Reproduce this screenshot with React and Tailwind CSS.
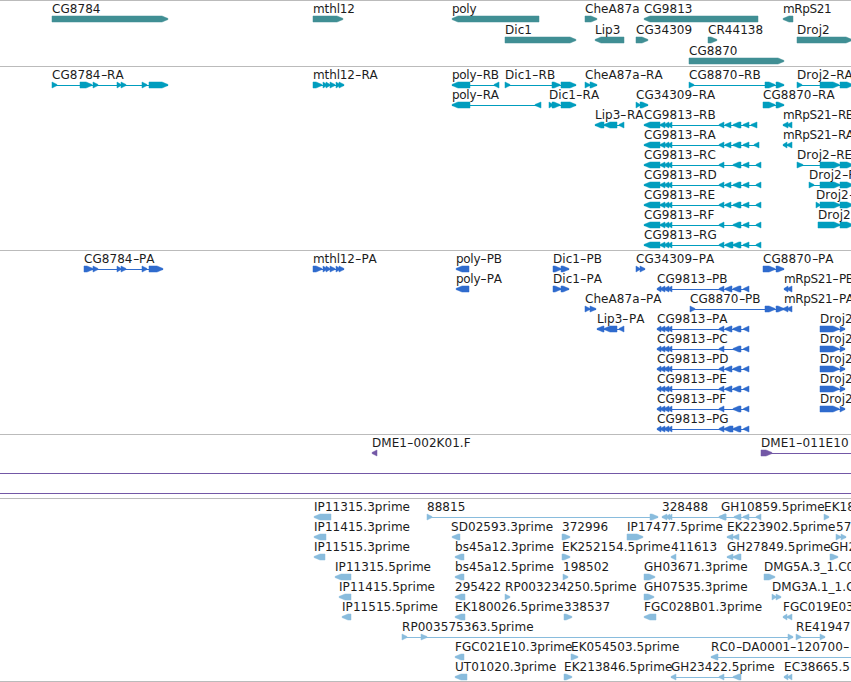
import { Fragment } from 'react';

const VIEW_WIDTH = 851;
const HEAD = 6;

// A feature is [name, start, strand, parts, lineEnd]. Parts are [from, to] pairs.
const UTR_3 = [[644, 660], [660, 665], [664, 669], [668, 672]];
const CDS_3 = [[657, 661], [660, 665], [664, 669], [668, 672]];
const RF_TAIL = [[719, 724], [733, 741], [743, 749], [756, 761]];
const RD_TAIL = [[719, 724], [725, 731], [733, 741], [743, 749], [756, 761]];
const PA_TAIL = [[719, 724], [725, 732], [733, 741], [743.5, 749]];
const PC_TAIL = [[719, 724], [733, 741], [743.5, 749]];
const DROJ2_CDS = [[820, 839], [840, 845]];

const TRACKS = [
  {
    id: 'genes',
    color: '#408f94',
    rowClass: 'h-[21px]',
    className: 'pb-[2px]',
    rows: [
      [
        ['CG8784', 52, 1, [[52, 168]]],
        ['mthl12', 313, 1, [[313, 343]]],
        ['poly', 452, -1, [[452, 539]]],
        ['CheA87a', 585, 1, [[585, 597]]],
        ['CG9813', 644, -1, [[644, 758]]],
        ['mRpS21', 783, -1, [[783, 793]]],
      ],
      [
        ['Dic1', 505, 1, [[505, 576]]],
        ['Lip3', 595, -1, [[595, 624]]],
        ['CG34309', 636, 1, [[636, 648]]],
        ['CR44138', 708, 1, [[708, 717]]],
        ['Droj2', 797, 1, [[797, 852]]],
      ],
      [['CG8870', 689, 1, [[689, 784]]]],
    ],
  },
  {
    id: 'transcripts',
    color: '#009dbe',
    rows: [
      [
        ['CG8784-RA', 52, 1, [[52, 57], [80, 92], [93, 98], [117, 121], [121, 126], [142, 147], [149, 168]]],
        ['mthl12-RA', 313, 1, [[313, 322], [323, 327], [326, 330], [330, 335], [336, 340], [339, 344]]],
        ['poly-RB', 452, -1, [[452, 470], [494, 499]]],
        ['Dic1-RB', 505, 1, [[505, 510], [552, 560], [561, 576]]],
        ['CheA87a-RA', 585, 1, [[585, 590], [590, 597]]],
        ['CG8870-RB', 689, 1, [[689, 694], [765, 775], [776, 784]]],
        ['Droj2-RA', 797, 1, [[797, 802], [820, 839], [840, 853]]],
      ],
      [
        ['poly-RA', 452, -1, [[452, 470], [535, 541]]],
        ['Dic1-RA', 549, 1, [[549, 553], [552, 560], [561, 576]]],
        ['CG34309-RA', 636, 1, [[636, 640], [640, 648]]],
        ['CG8870-RA', 763, 1, [[763, 775], [776, 784]]],
      ],
      [
        ['Lip3-RA', 595, -1, [[595, 604], [604, 617], [619, 624]]],
        ['CG9813-RB', 644, -1, [...UTR_3, [719, 724], [725, 731], [733, 741], [743, 749], [751, 757]]],
        ['mRpS21-RB', 783, -1, [[783, 788], [787, 792]]],
      ],
      [
        ['CG9813-RA', 644, -1, [...UTR_3, [719, 724], [725, 731], [733, 741], [743, 749], [754, 759]]],
        ['mRpS21-RA', 783, -1, [[783, 787], [787, 792]]],
      ],
      [
        ['CG9813-RC', 644, -1, [...UTR_3, ...RF_TAIL]],
        ['Droj2-RE', 797, 1, [[797, 803], [820, 840], [840, 853]]],
      ],
      [
        ['CG9813-RD', 644, -1, [...UTR_3, ...RD_TAIL]],
        ['Droj2-RB', 809, 1, [[809, 814], [820, 840], [840, 853]]],
      ],
      [
        ['CG9813-RE', 644, -1, [...UTR_3, ...RD_TAIL]],
        ['Droj2-RC', 816, 1, [[816, 820], [820, 840], [840, 853]]],
      ],
      [
        ['CG9813-RF', 644, -1, [...UTR_3, ...RF_TAIL]],
        ['Droj2-RD', 818, 1, [[818, 840], [840, 853]]],
      ],
      [['CG9813-RG', 644, -1, [...UTR_3, [719, 724], [725, 733], [733, 741], [743, 749], [756, 761]]]],
    ],
  },
  {
    id: 'proteins',
    color: '#2f6bcd',
    rows: [
      [
        ['CG8784-PA', 84, 1, [[84, 93], [93, 98], [117, 121], [121, 126], [142, 147], [149, 163]]],
        ['mthl12-PA', 313, 1, [[313, 322], [323, 327], [326, 330], [330, 335], [336, 340], [339, 344]]],
        ['poly-PB', 456, -1, [[456, 469]]],
        ['Dic1-PB', 553, 1, [[553, 561], [561, 569]]],
        ['CG34309-PA', 636, 1, [[636, 640], [640, 645]]],
        ['CG8870-PA', 763, 1, [[763, 775], [776, 784]]],
      ],
      [
        ['poly-PA', 456, -1, [[456, 469]]],
        ['Dic1-PA', 553, 1, [[553, 561], [561, 569]]],
        ['CG9813-PB', 657, -1, [...CDS_3, ...PA_TAIL]],
        ['mRpS21-PB', 784, -1, [[784, 788], [787, 792]]],
      ],
      [
        ['CheA87a-PA', 585, 1, [[585, 590], [590, 596]]],
        ['CG8870-PB', 690, 1, [[690, 695], [765, 775], [776, 784]]],
        ['mRpS21-PA', 784, -1, [[783, 788], [787, 792]]],
      ],
      [
        ['Lip3-PA', 597, -1, [[597, 604], [604, 617], [619, 624]]],
        ['CG9813-PA', 657, -1, [...CDS_3, ...PA_TAIL]],
        ['Droj2-PA', 820, 1, DROJ2_CDS],
      ],
      [
        ['CG9813-PC', 657, -1, [...CDS_3, ...PC_TAIL]],
        ['Droj2-PB', 820, 1, DROJ2_CDS],
      ],
      [
        ['CG9813-PD', 657, -1, [...CDS_3, ...PA_TAIL]],
        ['Droj2-PC', 820, 1, DROJ2_CDS],
      ],
      [
        ['CG9813-PE', 657, -1, [...CDS_3, ...PA_TAIL]],
        ['Droj2-PD', 820, 1, DROJ2_CDS],
      ],
      [
        ['CG9813-PF', 657, -1, [...CDS_3, ...PC_TAIL]],
        ['Droj2-PE', 820, 1, DROJ2_CDS],
      ],
      [['CG9813-PG', 657, -1, [...CDS_3, [719, 724], [724, 733], [733, 741], [743.5, 749]]]],
    ],
  },
  {
    id: 'bacs',
    color: '#7358a6',
    rows: [
      [
        ['DME1-002K01.F', 372, -1, [[372, 377]]],
        ['DME1-011E10', 761, 1, [[761, 772]], VIEW_WIDTH],
      ],
      [['', 0, 1, [], VIEW_WIDTH]],
      [['', 0, 1, [], VIEW_WIDTH]],
    ],
  },
  {
    id: 'ests',
    color: '#89bcdd',
    className: 'border-b pb-[2px]',
    rows: [
      [
        ['IP11315.3prime', 314, -1, [[314, 331]]],
        ['88815', 427, 1, [[427, 432], [650, 658]]],
        ['328488', 662, -1, [[662, 667], [666, 670], [669, 672], [719, 726]]],
        ['GH10859.5prime', 721, -1, [[719, 726], [734, 741], [743, 749], [756, 761]]],
        ['EK188110', 824, 1, [[824, 829]]],
      ],
      [
        ['IP11415.3prime', 314, -1, [[314, 326]]],
        ['SD02593.3prime', 451, -1, [[452, 460]]],
        ['372996', 562, 1, [[562, 570]]],
        ['IP17477.5prime', 627, 1, [[627, 643]]],
        ['EK223902.5prime', 727, -1, [[727, 733], [733, 739]]],
        ['57', 836, 1, [[836, 841], [841, 846]]],
      ],
      [
        ['IP11515.3prime', 314, -1, [[314, 325]]],
        ['bs45a12.3prime', 455, -1, [[455, 464]]],
        ['EK252154.5prime', 562, 1, [[562, 570]]],
        ['411613', 671, -1, [[671, 676]]],
        ['GH27849.5prime', 727, -1, [[727, 733], [733, 741]]],
        ['GH2', 830, 1, [[830, 838]]],
      ],
      [
        ['IP11315.5prime', 335, -1, [[335, 351]]],
        ['bs45a12.5prime', 455, -1, [[455, 464]]],
        ['198502', 563, 1, [[563, 568]]],
        ['GH03671.3prime', 644, 1, [[644, 655]]],
        ['DMG5A.3_1.C0', 764, 1, [[764, 775]]],
      ],
      [
        ['IP11415.5prime', 339, -1, [[339, 351]]],
        ['295422', 455, -1, [[455, 465]]],
        ['RP003234250.5prime', 505, 1, [[505, 510]]],
        ['GH07535.3prime', 644, 1, [[644, 654]]],
        ['DMG3A.1_1.C0', 772, 1, [[772, 776], [776, 781]]],
      ],
      [
        ['IP11515.5prime', 342, -1, [[342, 351]]],
        ['EK180026.5prime', 455, -1, [[455, 465]]],
        ['338537', 564, 1, [[564, 572]]],
        ['FGC028B01.3prime', 644, -1, [[644, 656]]],
        ['FGC019E03', 783, -1, [[783, 787], [787, 792]]],
      ],
      [
        ['RP003575363.5prime', 402, 1, [[402, 407], [421, 427], [788, 793]]],
        ['RE41947', 796, 1, [[796, 801], [820, 825]]],
      ],
      [
        ['FGC021E10.3prime', 455, -1, [[455, 464]]],
        ['EK054503.5prime', 571, 1, [[571, 578]]],
        ['RC0-DA0001-120700-', 711, -1, [[711, 718]], VIEW_WIDTH],
      ],
      [
        ['UT01020.3prime', 455, -1, [[455, 467]]],
        ['EK213846.5prime', 564, 1, [[564, 572]]],
        ['GH23422.5prime', 671, -1, [[671, 676], [719, 724], [733, 741]]],
        ['EC38665.5', 784, -1, [[784, 788], [788, 792]]],
      ],
    ],
  },
];

function arrowPoints(from, to, strand) {
  const head = Math.min(HEAD, to - from);
  if (strand > 0) {
    return `${from},0 ${to - head},0 ${to},2.5 ${to},3.5 ${to - head},6 ${from},6`;
  }
  return `${to},0 ${from + head},0 ${from},2.5 ${from},3.5 ${from + head},6 ${to},6`;
}

function trackingFor(name) {
  if (name.startsWith('mRpS21')) return 'tracking-[-0.36px]';
  if (name.startsWith('mthl12')) return 'tracking-[-0.12px]';
  if (name.startsWith('poly')) return 'tracking-[-0.3px]';
  return 'tracking-[0.05px]';
}

function Glyph({ start, strand, parts, lineEnd }) {
  const from = parts.length ? parts[0][0] : start;
  const end = lineEnd ?? parts[parts.length - 1][1];
  return (
    <g>
      {(parts.length !== 1 || lineEnd) && (
        <rect x={from} y="3" width={end - from} height="1" stroke="none" shapeRendering="crispEdges" />
      )}
      {parts.map(([a, b]) => (
        <polygon key={a} points={arrowPoints(a, b, strand)} />
      ))}
    </g>
  );
}

function Label({ name, start }) {
  return (
    <span
      className={`absolute top-0 leading-[16px] whitespace-nowrap ${trackingFor(name)}`}
      style={{ left: start }}
    >
      {name.split('-').map((piece, i) => (
        <Fragment key={i}>
          {i > 0 && <span className="inline-block w-[6.5px] scale-x-150 text-center">-</span>}
          {piece}
        </Fragment>
      ))}
    </span>
  );
}

function Row({ features, color, className = 'h-5' }) {
  return (
    <div className={`relative ${className}`}>
      <svg
        className="absolute left-0 top-[15px] overflow-visible"
        width={VIEW_WIDTH}
        height="6"
        fill={color}
        stroke={color}
        strokeWidth="0.5"
      >
        {features.map(([name, start, strand, parts, lineEnd], i) => (
          <Glyph key={name + i} start={start} strand={strand} parts={parts} lineEnd={lineEnd} />
        ))}
      </svg>
      {features.map(([name, start]) => name && <Label key={name} name={name} start={start} />)}
    </div>
  );
}

export default function App() {
  return (
    <div className="h-[682px] w-[851px] overflow-hidden bg-white font-['DejaVu_Sans',sans-serif] text-[12px] text-[#1c1c1c] [font-kerning:none]">
      {TRACKS.map((track) => (
        <section key={track.id} className={`border-t border-[#bbbbbb] ${track.className || 'pb-[3px]'}`}>
          {track.rows.map((features, i) => (
            <Row key={i} features={features} color={track.color} className={track.rowClass} />
          ))}
        </section>
      ))}
    </div>
  );
}
